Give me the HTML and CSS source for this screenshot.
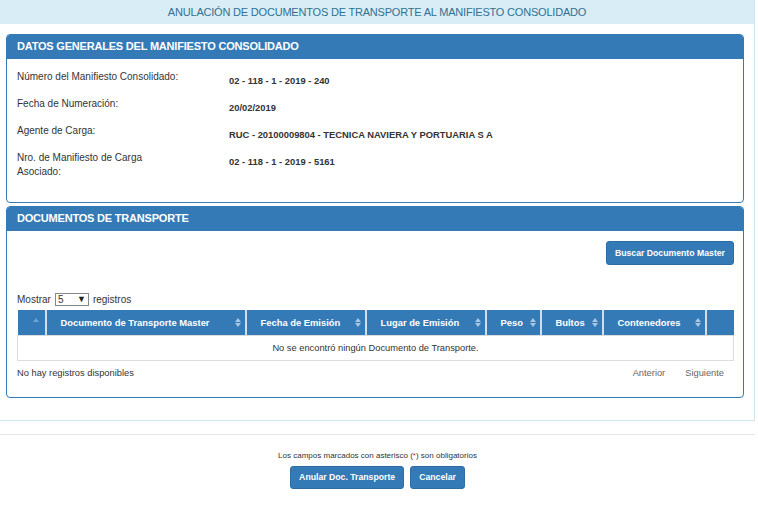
FILE: index.html
```html
<!DOCTYPE html>
<html lang="es">
<head>
    <meta charset="UTF-8">
    <title>Anulación de Documentos de Transporte</title>
    <link rel="stylesheet" href="styles.css">
</head>
<body>

    <!-- Contenedor principal -->
    <div class="page-box">
        <div class="page-title">ANULACIÓN DE DOCUMENTOS DE TRANSPORTE AL MANIFIESTO CONSOLIDADO</div>

        <div class="page-body">
            <!-- Datos generales -->
            <div class="panel panel-first">
                <div class="panel-heading">DATOS GENERALES DEL MANIFIESTO CONSOLIDADO</div>
                <div class="panel-body info-grid">
                    <div class="info-label">Número del Manifiesto Consolidado:</div>
                    <div class="info-value">02 - 118 - 1 - 2019 - 240</div>

                    <div class="info-label">Fecha de Numeración:</div>
                    <div class="info-value">20/02/2019</div>

                    <div class="info-label">Agente de Carga:</div>
                    <div class="info-value">RUC - 20100009804 - TECNICA NAVIERA Y PORTUARIA S A</div>

                    <div class="info-label">Nro. de Manifiesto de Carga<br>Asociado:</div>
                    <div class="info-value">02 - 118 - 1 - 2019 - 5161</div>
                </div>
            </div>

            <!-- Documentos de transporte -->
            <div class="panel">
                <div class="panel-heading">DOCUMENTOS DE TRANSPORTE</div>
                <div class="panel-body">
                    <div class="actions">
                        <button class="btn">Buscar Documento Master</button>
                    </div>

                    <div class="length-row">
                        Mostrar
                        <span class="select-box"><span>5</span><span class="caret">▼</span></span>
                        registros
                    </div>

                    <table class="data-table">
                        <thead>
                            <tr>
                                <th class="col-check"><span class="sort sort-asc"></span></th>
                                <th class="col-doc">Documento de Transporte Master<span class="sort"></span></th>
                                <th class="col-fecha">Fecha de Emisión<span class="sort"></span></th>
                                <th class="col-lugar">Lugar de Emisión<span class="sort"></span></th>
                                <th class="col-peso">Peso<span class="sort"></span></th>
                                <th class="col-bultos">Bultos<span class="sort"></span></th>
                                <th class="col-cont">Contenedores<span class="sort"></span></th>
                                <th class="col-last"></th>
                            </tr>
                        </thead>
                        <tbody>
                            <tr>
                                <td colspan="8" class="empty">No se encontró ningún Documento de Transporte.</td>
                            </tr>
                        </tbody>
                    </table>

                    <div class="table-footer">
                        <span>No hay registros disponibles</span>
                        <div class="pager">
                            <a href="#">Anterior</a>
                            <a href="#">Siguiente</a>
                        </div>
                    </div>
                </div>
            </div>
        </div>
    </div>

    <hr class="divider">

    <!-- Pie con acciones -->
    <div class="footer">
        <p class="note">Los campos marcados con asterisco (<span class="req">*</span>) son obligatorios</p>
        <div class="footer-buttons">
            <button class="btn btn-big">Anular Doc. Transporte</button>
            <button class="btn btn-big">Cancelar</button>
        </div>
    </div>

</body>
</html>
```

FILE: styles.css
```css
body {
    margin: 0;
    padding: 0;
    font-family: "Liberation Sans", Arial, sans-serif;
    font-size: 10px;
    color: #333;
    background: #fff;
}

/* Contenedor principal */
.page-box {
    width: 754px;
    border-right: 1px solid #cfe6f1;
    border-bottom: 1px solid #cfe6f1;
}

.page-title {
    height: 24px;
    line-height: 24px;
    background: #d9edf7;
    color: #31708f;
    text-align: center;
    font-size: 11px;
    letter-spacing: -0.2px;
}

.page-body {
    padding: 10px 10px 22px 6px;
}

/* Paneles */
.panel {
    border: 1px solid #337ab7;
    border-radius: 4px;
    background: #fff;
}

.panel-first {
    margin-bottom: 3px;
}

.panel-heading {
    height: 24px;
    line-height: 23px;
    padding: 0 10px;
    background: #337ab7;
    color: #fff;
    font-weight: bold;
    font-size: 11px;
    letter-spacing: -0.2px;
    border-radius: 3px 3px 0 0;
}

.panel-body {
    padding: 10px 9px 10px 10px;
}

/* Datos generales */
.info-grid {
    display: grid;
    grid-template-columns: 212px 1fr;
    row-gap: 9px;
    padding-top: 11px;
    padding-bottom: 23px;
}

.info-label {
    line-height: 14px;
}

.info-value {
    font-weight: bold;
    font-size: 9.4px;
    line-height: 14px;
    padding-top: 4px;
}

/* Botones */
.btn {
    background: #337ab7;
    border: 1px solid #2e6da4;
    color: #fff;
    font-family: "Liberation Sans", Arial, sans-serif;
    font-size: 8.7px;
    font-weight: bold;
    height: 24px;
    padding: 0 8px;
    border-radius: 3px;
    cursor: pointer;
}

.actions {
    display: flex;
    justify-content: flex-end;
}

.length-row {
    margin-top: 27px;
    display: flex;
    align-items: center;
    gap: 4px;
    height: 14px;
}

.select-box {
    display: inline-flex;
    justify-content: space-between;
    align-items: center;
    width: 28px;
    height: 11px;
    padding: 0 2px 0 2px;
    border: 1px solid #888;
    font-size: 10px;
    line-height: 11px;
}

.select-box .caret {
    font-size: 9px;
    color: #222;
}

/* Tabla */
.data-table {
    width: 717px;
    margin-top: 4px;
    border-collapse: collapse;
    table-layout: fixed;
}

.data-table th {
    box-sizing: border-box;
    height: 25px;
    padding: 0 10px 0 14px;
    background: #337ab7;
    color: #fff;
    font-size: 9.4px;
    font-weight: bold;
    text-align: left;
    border-left: 2px solid #d3dde7;
    position: relative;
}

.data-table th:first-child {
    border-left: none;
}

.col-check { width: 28px; }
.col-doc { width: 200px; }
.col-fecha { width: 120px; }
.col-lugar { width: 120px; }
.col-peso { width: 55px; }
.col-bultos { width: 62px; }
.col-cont { width: 103px; }

/* iconos de orden */
.sort {
    position: absolute;
    right: 4px;
    top: 8px;
    width: 6px;
    height: 10px;
}

.sort::before,
.sort::after {
    content: "";
    position: absolute;
    left: 0;
    border-left: 3px solid transparent;
    border-right: 3px solid transparent;
}

.sort::before {
    top: 0;
    border-bottom: 4px solid #a9c6e2;
}

.sort::after {
    top: 5px;
    border-top: 4px solid #a9c6e2;
}

.sort-asc {
    right: 6px;
}

.sort-asc::before {
    border-bottom-color: #6fa3d6;
}

.sort-asc::after {
    display: none;
}

.data-table td.empty {
    height: 22px;
    border: 1px solid #ddd;
    text-align: center;
    font-size: 9.3px;
    color: #333;
}

.table-footer {
    display: flex;
    justify-content: space-between;
    align-items: center;
    margin-top: 7px;
    padding-bottom: 9px;
    font-size: 9.3px;
}

.pager {
    display: flex;
    gap: 20px;
    padding-right: 10px;
}

.pager a {
    color: #666;
    text-decoration: none;
}

/* Pie */
.divider {
    margin: 13px 0 0 0;
    width: 755px;
    border: none;
    border-top: 1px solid #e5e5e5;
}

.footer {
    width: 755px;
    text-align: center;
}

.note {
    margin: 16px 0 6px 0;
    font-size: 8px;
    color: #333;
}

.req {
    color: #c9302c;
}

.footer-buttons {
    display: flex;
    justify-content: center;
    gap: 6px;
}

.btn-big {
    height: 23px;
}
```
